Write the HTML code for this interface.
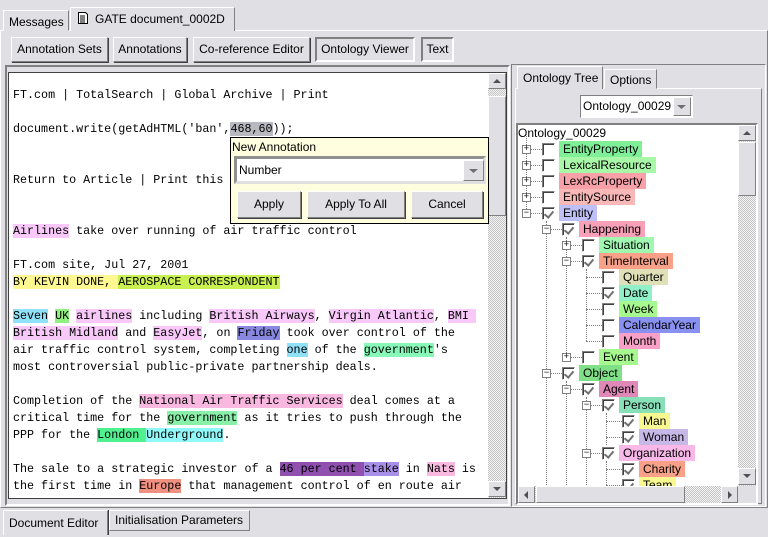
<!DOCTYPE html>
<html><head><style>
*{box-sizing:border-box;margin:0;padding:0}
body{width:768px;height:537px;background:#e0e0e4;position:relative;overflow:hidden;font-family:"Liberation Sans",sans-serif;font-size:12px;color:#000}
.a{position:absolute}
.btn{position:absolute;background:#e0e0e4;border:1px solid;border-color:#fff #808080 #808080 #fff;box-shadow:1px 1px 0 #404040;text-align:center;line-height:22px;white-space:nowrap}
.prs{position:absolute;background:#e0e0e4;border:2px solid;border-color:#808080 #fff #fff #808080;text-align:center;line-height:20px}
.sunk{position:absolute;border:2px solid;border-color:#808080 #fff #fff #808080}
.chk{background:repeating-conic-gradient(#c4c4c4 0 25%,#f4f4f4 0 50%) 0 0/2px 2px}
.sb{position:absolute;background:#e0e0e4;border:1px solid;border-color:#fff #808080 #808080 #fff}
.mono{font-family:"Liberation Mono",monospace;font-size:11.7px;white-space:pre;position:absolute;left:13px;line-height:17px}
.hl{}
.tab{position:absolute;border:1px solid;border-color:#fff #808080 transparent #fff;background:#e0e0e4;line-height:20px;padding:0 5px;white-space:nowrap}
.row{position:absolute;height:16px;line-height:16px;white-space:nowrap}
.ex{position:absolute;width:9px;height:9px;border:1px solid #808080;background:#fff;font-size:9px;line-height:7px;text-align:center;font-family:"Liberation Mono",monospace}
.cb{position:absolute;width:13px;height:13px;border:1px solid;border-color:#808080 #fff #fff #808080;background:#fff;box-shadow:inset 1px 1px 0 #404040}
.cb.on::after{content:"";position:absolute;left:3px;top:1px;width:4px;height:7px;border:solid #707070;border-width:0 2px 2px 0;transform:rotate(40deg)}
.lb{position:absolute;padding:0 4px;height:16px;line-height:16px}
.hd{position:absolute;height:0;border-top:1px dotted #808080;width:8px}
.vd{position:absolute;width:0;border-left:1px dotted #808080}
</style></head><body>
<!-- top tabs -->
<div class="a" style="left:0;top:30px;width:768px;height:478px;border:1px solid;border-color:#fff #808080 #808080 #fff"></div>
<div class="tab" style="left:3px;top:10px;width:66px;height:21px;line-height:22px">Messages</div>
<div class="tab" style="left:70px;top:7px;width:165px;height:24px;background:#e0e0e4;border-bottom:none;padding-left:6px;line-height:22px"><svg width="12" height="14" style="vertical-align:-2px;margin-right:6px"><path d="M1.5 1.5h7l2 2v9h-9z" fill="#fff" stroke="#000"/><path d="M3 5h5M3 7h5M3 9h5M3 11h5" stroke="#000"/></svg>GATE document_0002D</div>
<!-- buttons -->
<div class="btn" style="left:11px;top:37px;width:97px;height:25px">Annotation Sets</div>
<div class="btn" style="left:113px;top:37px;width:74px;height:25px">Annotations</div>
<div class="btn" style="left:193px;top:37px;width:117px;height:25px">Co-reference Editor</div>
<div class="prs" style="left:315px;top:37px;width:100px;height:25px">Ontology Viewer</div>
<div class="prs" style="left:421px;top:37px;width:33px;height:25px">Text</div>
<!-- text area -->
<div class="sunk" style="left:5px;top:65px;width:505px;height:441px"></div>
<div class="a" style="left:8px;top:72px;width:499px;height:427px;border:1px solid #404040;background:#fff"></div>
<div class="a chk" style="left:488px;top:73px;width:18px;height:425px"></div>
<div class="sb" style="left:488px;top:73px;width:18px;height:16px"><svg width="16" height="14" class="a" style="left:0;top:0"><path d="M4 9h8L8 5z" fill="#505050"/></svg></div>
<div class="sb" style="left:488px;top:96px;width:18px;height:120px"></div>
<div class="sb" style="left:488px;top:481px;width:18px;height:16px"><svg width="16" height="14" class="a" style="left:0;top:0"><path d="M4 5h8L8 9z" fill="#505050"/></svg></div>
<div class="a" style="left:9px;top:73px;width:479px;height:424px;overflow:hidden">
<div class="mono" style="left:4px;top:14px">FT.com | TotalSearch | Global Archive | Print</div>
<div class="mono" style="left:4px;top:48px">document.write(getAdHTML('ban',<span style="background:#b8b8c0">468,60</span>));</div>
<div class="mono" style="left:4px;top:99px">Return to Article | Print this</div>
<div class="mono" style="left:4px;top:150px"><span style="background:#f8c8f8">Airlines</span> take over running of air traffic control</div>
<div class="mono" style="left:4px;top:184px">FT.com site, Jul 27, 2001
<span style="background:#fff890">BY KEVIN DONE, </span><span style="background:#c8f050">AEROSPACE CORRESPONDENT</span></div>
<div class="mono" style="left:4px;top:235px"><span style="background:#90e0f8">Seven</span> <span style="background:#90f080">UK</span> <span style="background:#f8c8f8">airlines</span> including <span style="background:#f8c8f8">British Airways</span>, <span style="background:#f8c8f8">Virgin Atlantic</span>, <span style="background:#f8c8f8">BMI </span>
<span style="background:#f8c8f8">British Midland</span> and <span style="background:#f8c8f8">EasyJet</span>, on <span style="background:#8888e0">Friday</span> took over control of the
air traffic control system, completing <span style="background:#90e0f8">one</span> of the <span style="background:#88f8b8">government</span>'s
most controversial public-private partnership deals.

Completion of the <span style="background:#f8b8e0">National Air Traffic Services</span> deal comes at a
critical time for the <span style="background:#88f0a8">government</span> as it tries to push through the
PPP for the <span style="background:#50f090">London </span><span style="background:#90f8f8">Underground</span>.

The sale to a strategic investor of a <span style="background:#9050b0">46 per cent </span><span style="background:#a890e8">stake</span> in <span style="background:#f8b8e0">Nats</span> is
the first time in <span style="background:#f09080">Europe</span> that management control of en route air</div>
</div>
<!-- popup -->
<div class="a" style="left:230px;top:137px;width:259px;height:87px;background:#ffffe0;border:1px solid #000">
<div class="a" style="left:1px;top:2px;font-size:12px">New Annotation</div>
<div class="a" style="left:3px;top:18px;width:252px;height:28px;border:3px solid;border-color:#909090 #e0e0e0 #e0e0e0 #909090;background:#fff"><div class="a" style="left:2px;top:4px">Number</div><div class="sb" style="left:226px;top:1px;width:21px;height:21px"><svg width="19" height="19"><path d="M5 8h9l-4.5 4z" fill="#707070"/></svg></div></div>
<div class="btn" style="left:6px;top:53px;width:64px;height:27px;line-height:25px">Apply</div>
<div class="btn" style="left:76px;top:53px;width:98px;height:27px;line-height:25px">Apply To All</div>
<div class="btn" style="left:180px;top:53px;width:72px;height:27px;line-height:25px">Cancel</div>
</div>
<!-- right panel -->
<div class="sunk" style="left:511px;top:64px;width:255px;height:443px;border-width:1px"></div>
<div class="a" style="left:515px;top:88px;width:247px;height:416px;border:1px solid;border-color:#fff #808080 #808080 #fff"></div>
<div class="tab" style="left:517px;top:66px;width:86px;height:23px;border-bottom:none;line-height:22px">Ontology Tree</div>
<div class="tab" style="left:604px;top:69px;width:53px;height:20px;line-height:21px">Options</div>
<div class="a" style="left:580px;top:95px;width:113px;height:23px;border:1px solid;border-color:#808080 #fff #fff #808080;background:#fff"><div class="a" style="left:2px;top:3px">Ontology_00029</div><div class="sb" style="left:92px;top:1px;width:18px;height:19px"><svg width="16" height="17"><path d="M3 7h9l-4.5 4z" fill="#707070"/></svg></div></div>
<div class="a" style="left:516px;top:123px;width:242px;height:382px;border:2px solid;border-color:#808080 #fff #fff #808080"></div>
<div class="a" style="left:518px;top:125px;width:220px;height:361px;background:#fff;overflow:hidden" id="tree">
<div class="row" style="left:0;top:0">Ontology_00029</div>
</div>
<div class="a chk" style="left:738px;top:125px;width:18px;height:361px"></div>
<div class="sb" style="left:738px;top:125px;width:18px;height:16px"><svg width="16" height="14"><path d="M4 9h8L8 5z" fill="#505050"/></svg></div>
<div class="sb" style="left:738px;top:142px;width:18px;height:54px"></div>
<div class="sb" style="left:738px;top:468px;width:18px;height:17px"><svg width="16" height="14"><path d="M4 5h8L8 9z" fill="#505050"/></svg></div>
<div class="a chk" style="left:518px;top:486px;width:220px;height:17px"></div>
<div class="sb" style="left:518px;top:486px;width:17px;height:17px"><svg width="15" height="15"><path d="M9 4v8L5 8z" fill="#505050"/></svg></div>
<div class="sb" style="left:536px;top:486px;width:149px;height:17px"></div>
<div class="sb" style="left:721px;top:486px;width:17px;height:17px"><svg width="15" height="15"><path d="M6 4v8L10 8z" fill="#505050"/></svg></div>
<div class="a" style="left:738px;top:486px;width:18px;height:17px;background:#e0e0e4"></div>
<!-- bottom tabs -->
<div class="tab" style="left:3px;top:510px;width:105px;height:25px;border-bottom:none;line-height:24px;box-shadow:1px 0 0 #404040">Document Editor</div>
<div class="tab" style="left:109px;top:510px;width:141px;height:21px;border-color:#fff #808080 #808080 #fff;line-height:19px">Initialisation Parameters</div>
<script>
var T=document.getElementById('tree');
var items=[[1,'+',0,'EntityProperty','#80f098'],[1,'+',0,'LexicalResource','#a8f8a8'],[1,'+',0,'LexRcProperty','#f8a0a8'],[1,'+',0,'EntitySource','#f8b8b8'],[1,'-',1,'Entity','#c0c0f8'],[2,'-',1,'Happening','#f8a0b8'],[3,'+',0,'Situation','#a0f8b0'],[3,'-',1,'TimeInterval','#f8a088'],[4,'',0,'Quarter','#e0e0b8'],[4,'',1,'Date','#90f0c8'],[4,'',0,'Week','#a8f890'],[4,'',0,'CalendarYear','#8890f0'],[4,'',0,'Month','#f8a0c8'],[3,'+',0,'Event','#a8f890'],[2,'-',1,'Object','#80e088'],[3,'-',1,'Agent','#e088b8'],[4,'-',1,'Person','#88e0b8'],[5,'',1,'Man','#f8f890'],[5,'',1,'Woman','#c8b8e8'],[4,'-',1,'Organization','#f8b8e8'],[5,'',1,'Charity','#f8a088'],[5,'',1,'Team','#f8f890']];
var h='';
// vertical dotted lines (coords relative to tree origin 518,125)
var v=[[8,8,88],[28,96,400],[48,112,232],[68,144,216],[48,256,400],[68,272,400],[88,288,320],[88,336,400]];
v.forEach(function(a){h+='<div class="vd" style="left:'+a[0]+'px;top:'+a[1]+'px;height:'+(a[2]-a[1])+'px"></div>';});
items.forEach(function(it,i){var L=it[0],top=16+16*i,cy=top+8;
var ex=4+20*(L-1),cb=24+20*(L-1),lb=41+20*(L-1);
h+='<div class="hd" style="left:'+(ex+4)+'px;top:'+cy+'px;width:'+(cb-ex-4)+'px"></div>';
if(it[1])h+='<div class="ex" style="left:'+ex+'px;top:'+(cy-4)+'px">'+(it[1]=='+'?'+':'&minus;')+'</div>';
h+='<div class="cb'+(it[2]?' on':'')+'" style="left:'+cb+'px;top:'+(cy-6)+'px"></div>';
h+='<div class="lb" style="left:'+lb+'px;top:'+top+'px;background:'+it[4]+'">'+it[3]+'</div>';});
T.innerHTML+=h;
</script>
</body></html>
